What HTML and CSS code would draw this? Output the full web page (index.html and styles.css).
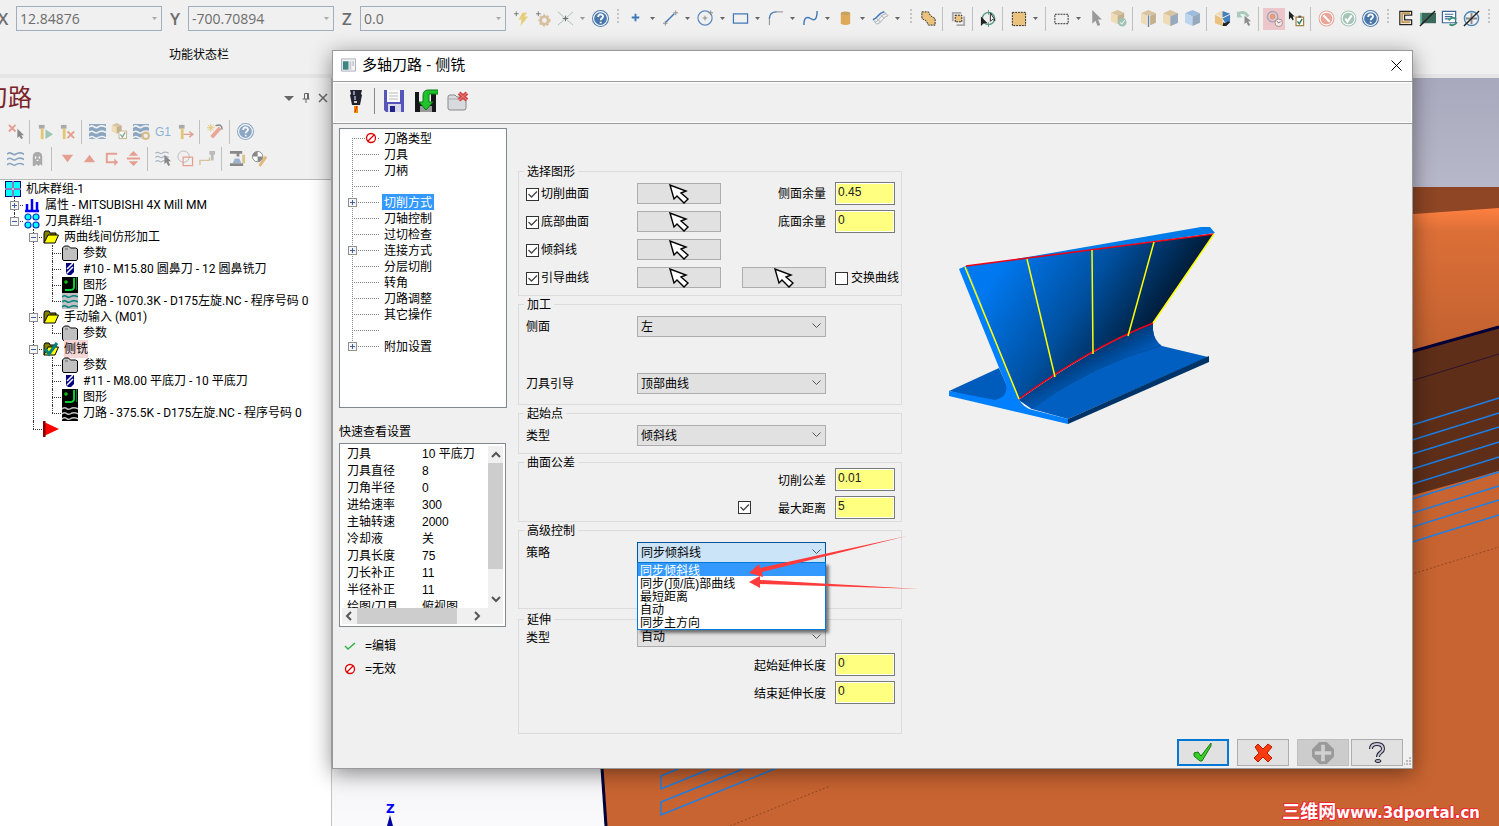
FILE: index.html
```
<!DOCTYPE html>
<html lang="zh-CN">
<head>
<meta charset="UTF-8">
<meta name="viewport" content="width=device-width, initial-scale=1.0">
<title>多轴刀路 - 侧铣</title>
<link rel="stylesheet" href="styles.css">
</head>
<body>

<!-- Shared icons -->
<svg class="sprite" aria-hidden="true">
    <symbol id="caret" viewBox="0 0 7 4"><path d="M1 0h5L3.500 3z" fill="currentColor"/></symbol>
    <symbol id="pick" viewBox="-1 -1 20 20"><path d="M0 0l4 14 3-3 7 7 4-4-7-6 5-2z" fill="#fff" stroke="#000" stroke-width="1.400"/></symbol>
    <symbol id="cursor" viewBox="0 0 10 16"><path d="M1 0v13l3-3 2 5 2.500-1-2-5H10z" fill="currentColor"/></symbol>
    <symbol id="waves" viewBox="0 0 16 16"><path d="M0 4c4-4 5 2 8 0s5-2 8 0M0 9c4-4 5 2 8 0s5-2 8 0M0 14c4-4 5 2 8 0s5-2 8 0" fill="none" stroke="currentColor" stroke-width="1.500"/></symbol>
    <symbol id="help" viewBox="0 0 16 16"><circle cx="8" cy="8" r="7.500" fill="#fff" stroke="#4a78ab"/><circle cx="8" cy="8" r="6" fill="#4a78ab"/><path d="M5.800 6.500c0-3 4.600-3 4.600-.4C10.400 7.800 8.200 7.600 8.200 9.600M8.200 11v1.500" fill="none" stroke="#fff" stroke-width="1.700"/></symbol>
    <symbol id="cube" viewBox="0 0 16 16"><path d="M8 0l7 3-7 3-7-3z" fill="#d9c4a2"/><path d="M1 3l7 3v9l-7-3z" fill="#efdcb6"/><path d="M15 3L8 6v9l7-3z" fill="#c5b08e"/></symbol>
    <symbol id="folder" viewBox="0 0 16 14"><path d="M1 13V3l1-2h4l1 2h6v2" fill="#808000" stroke="#000"/><path d="M1 13L5 5h10.500L12 13z" fill="#ff0" stroke="#000"/></symbol>
    <symbol id="params" viewBox="0 0 16 16"><path d="M.500 14V3l2-2h4l2 2h5l2 1v10l-1 1.500h-13z" fill="#c0c0c0" stroke="#000"/><path d="M3 4h3" stroke="#666"/></symbol>
    <symbol id="mill" viewBox="0 0 16 16"><path d="M4 2h8v9l-3 3H6l-2-2z" fill="#000080"/><path d="M5 8l6-6M5 12l6-6" stroke="#fff" stroke-width="1.500"/></symbol>
    <symbol id="geometry" viewBox="0 0 16 16"><path fill="#000" d="M0 0h16v16H0z"/><path d="M12 1v9q0 3-4 3H3" fill="none" stroke="#00d030" stroke-width="2"/><path d="M14.500 0v13" stroke="#067a1a"/><path d="M4 3v4M2 5h4" stroke="#0f0"/></symbol>
    <symbol id="denied" viewBox="0 0 12 12"><circle cx="6" cy="6" r="4.500" fill="#fff" stroke="#e00000" stroke-width="1.300"/><path d="M3 9l6-6" stroke="#e00000" stroke-width="1.300"/></symbol>
</svg>

<!-- Top ribbon -->
<header class="ribbon">
    <div class="ribbon-row">
        <div class="coords">
            <label for="posX">X</label><input id="posX" type="text" value="12.84876">
            <label for="posY">Y</label><input id="posY" type="text" value="-700.70894">
            <label for="posZ">Z</label><input id="posZ" type="text" value="0.0">
        </div>
        <button class="tool" aria-label="快速点"><svg viewBox="0 0 18 18"><path d="M1 4h5M3.500 1.500v5" stroke="#777"/><path d="M10 3h5l-3 4h4L8 17l1-7H6z" fill="#e6ce78"/></svg></button>
        <button class="tool" aria-label="设置"><svg viewBox="0 0 18 18"><path d="M1 4h5M3.500 1.500v5" stroke="#777"/><circle cx="10" cy="11" r="4" fill="none" stroke="#d7c0a0" stroke-width="3"/><circle cx="10" cy="11" r="5.500" fill="none" stroke="#d7c0a0" stroke-width="2" stroke-dasharray="2 2"/></svg></button>
        <button class="tool" aria-label="交点"><svg viewBox="0 0 18 18"><path d="M1 2l16 14M17 2L1 16" stroke="#a3bfb4"/><path d="M6 9h6M9 6v6" stroke="#666"/></svg></button>
        <button class="drop pale" aria-label="更多"><svg><use href="#caret"/></svg></button>
        <button class="tool" aria-label="帮助"><svg><use href="#help"/></svg></button>
        <span class="grip"></span>
        <button class="tool" aria-label="点"><svg viewBox="0 0 18 18"><path d="M5 8h8M9 4v8" stroke="#3f78b8" stroke-width="2"/></svg></button>
        <button class="drop" aria-label="更多"><svg><use href="#caret"/></svg></button>
        <button class="tool" aria-label="线"><svg viewBox="0 0 18 18"><path d="M4 13L13 4" stroke="#3f78b8" stroke-width="1.500"/><path d="M1 14h5M3.500 11.500v5M12 3h5M14.500.500v5" stroke="#888"/></svg></button>
        <button class="drop" aria-label="更多"><svg><use href="#caret"/></svg></button>
        <button class="tool" aria-label="圆"><svg viewBox="0 0 18 18"><circle cx="8.500" cy="8.500" r="7.500" fill="none" stroke="#5c8cc0" stroke-width="1.300"/><path d="M6 8.500h5M8.500 6v5M12 3h5M14.500.500v5" stroke="#888"/></svg></button>
        <button class="drop" aria-label="更多"><svg><use href="#caret"/></svg></button>
        <button class="tool" aria-label="矩形"><svg viewBox="0 0 18 18"><path d="M1.500 4h15v10h-15z" fill="none" stroke="#3f78b8" stroke-width="1.300"/></svg></button>
        <button class="drop" aria-label="更多"><svg><use href="#caret"/></svg></button>
        <button class="tool" aria-label="圆角"><svg viewBox="0 0 18 18"><path d="M2.500 8v8M9 2h8" stroke="#888"/><path d="M2.500 9Q3 2 10 2" fill="none" stroke="#3f78b8" stroke-width="1.500"/></svg></button>
        <button class="drop" aria-label="更多"><svg><use href="#caret"/></svg></button>
        <button class="tool" aria-label="曲线"><svg viewBox="0 0 18 18"><path d="M2 16C2 7 6 7 9 9s7 3 7-8" fill="none" stroke="#3f78b8" stroke-width="1.500"/></svg></button>
        <button class="drop" aria-label="更多"><svg><use href="#caret"/></svg></button>
        <button class="tool" aria-label="圆柱"><svg viewBox="0 0 18 18"><path d="M4 3.500v11q5 3 10 0v-11z" fill="#dfaa58"/><ellipse cx="9" cy="3.500" rx="5" ry="2" fill="#c9a262"/></svg></button>
        <button class="drop" aria-label="更多"><svg><use href="#caret"/></svg></button>
        <button class="tool" aria-label="曲面"><svg viewBox="0 0 18 18"><path d="M1 10C6 10 6 3 13 2l4 4C11 7 11 14 5 15zM3 13C9 11 8 5 15 4M5 9l4 4M9 5l4 4" fill="none" stroke="#aab0b8"/><path d="M1 10C6 10 6 3 13 2" fill="none" stroke="#3f78b8" stroke-width="1.500"/></svg></button>
        <button class="drop" aria-label="更多"><svg><use href="#caret"/></svg></button>
        <span class="grip"></span>
        <button class="tool" aria-label="框选"><svg viewBox="0 0 18 18"><path d="M2 2h7l2 4 5 3v7H9l-2-4-5-3z" fill="#ebc27d" stroke="#222" stroke-dasharray="2 1"/></svg></button>
        <span class="sep"></span>
        <button class="tool" aria-label="选择内部"><svg viewBox="0 0 18 18"><path d="M3 12V3h9M15 7v9H7" fill="none" stroke="#aaa" stroke-width="2"/><path d="M5.500 5.500h7v7h-7z" fill="#ebc27d" stroke="#222" stroke-dasharray="2 1"/></svg></button>
        <span class="sep"></span>
        <button class="tool" aria-label="切换选择"><svg viewBox="0 0 18 18"><circle cx="9" cy="9" r="6.500" fill="none" stroke="#579a86" stroke-width="1.500"/><path d="M9 0v5M9 13v5" stroke="#579a86"/><path d="M1 7v10l3-3h4z" fill="#222"/><path d="M11 3v9l2-2 3 1z" fill="#fff" stroke="#222"/></svg></button>
        <span class="sep"></span>
        <button class="tool" aria-label="窗选"><svg viewBox="0 0 18 18"><path d="M2.500 2.500h14v14h-14z" fill="#ebc27d" stroke="#222" stroke-dasharray="2 1"/></svg></button>
        <button class="drop" aria-label="更多"><svg><use href="#caret"/></svg></button>
        <span class="sep"></span>
        <button class="tool" aria-label="范围"><svg viewBox="0 0 18 18"><path d="M2 4.500h14v10H2z" fill="none" stroke="#222" stroke-dasharray="2 1"/></svg></button>
        <button class="drop" aria-label="更多"><svg><use href="#caret"/></svg></button>
        <button class="tool gray" aria-label="选择"><svg><use href="#cursor"/></svg></button>
        <button class="tool" aria-label="实体选择"><svg viewBox="0 0 18 18"><use href="#cube" width="16" height="16"/><circle cx="13" cy="13" r="4.500" fill="#9fc4b5"/><path d="M11 13l1.500 2 3-4" fill="none" stroke="#fff"/></svg></button>
        <span class="sep"></span>
        <button class="tool" aria-label="边"><svg viewBox="0 0 16 16"><use href="#cube"/><path d="M6.500 5h3v11h-3z" fill="#fff"/><path d="M8 5v11" stroke="#6a86a5" stroke-width="1.500"/></svg></button>
        <button class="tool" aria-label="面"><svg viewBox="0 0 16 16"><use href="#cube"/><path d="M15 3L8 6v9l7-3z" fill="#96abc0"/></svg></button>
        <button class="tool" aria-label="实体"><svg viewBox="0 0 16 16"><path d="M8 0l7 3-7 3-7-3z" fill="#9dbbdc"/><path d="M1 3l7 3v9l-7-3z" fill="#bdd5ee"/><path d="M15 3L8 6v9l7-3z" fill="#95a8bd"/></svg></button>
        <span class="sep"></span>
        <button class="tool" aria-label="反转面"><svg viewBox="0 0 18 18"><path d="M9 1L1 4l8 4z" fill="#efdcb6"/><path d="M9 1l8 3-8 4zM17 5v8l-4 2-4-6z" fill="#457fbd"/><path d="M1 5l8 4v8l-8-3z" fill="#ebc27d"/><path d="M9 17l1-4 2 1 3-2 2 1-4 4z" fill="#222"/></svg></button>
        <button class="tool" aria-label="上次"><svg viewBox="0 0 18 18"><path d="M2 4q7-4 11 3" fill="none" stroke="#a8cabd" stroke-width="3"/><path d="M1 1v7h6z" fill="#a8cabd"/><path d="M9 6v9l2-2 2 4 2-1-2-4h3z" fill="#8c8c8c"/></svg></button>
        <span class="sep"></span>
        <button class="tool active" aria-label="验证选择"><svg viewBox="0 0 18 18"><circle cx="7" cy="7" r="5.500" fill="none" stroke="#a6a6b4" stroke-width="1.500"/><circle cx="7" cy="7" r="2.500" fill="#ec9c78" stroke="#c89a80"/><circle cx="13.500" cy="13.500" r="4" fill="#f6e6e6" stroke="#a09090"/><path d="M11.500 12l2 1.500 2-1" fill="none" stroke="#777"/></svg></button>
        <button class="tool" aria-label="选择验证"><svg viewBox="0 0 18 18"><path d="M1 1v9l2-2 2 3 1-1-1-3h2z" fill="#222"/><path d="M8.500 7.500h8v9h-8z" fill="#fff" stroke="#a8823c" stroke-width="1.300"/><path d="M11 6h3v2h-3z" fill="#555"/><path d="M10 12l2 2.500 3-5" fill="none" stroke="#2e7d64" stroke-width="1.500"/></svg></button>
        <span class="sep"></span>
        <button class="tool" aria-label="取消"><svg viewBox="0 0 16 16"><circle cx="8" cy="8" r="7" fill="#fff" stroke="#e8a598"/><circle cx="8" cy="8" r="5.500" fill="#e8a598"/><path d="M5 5l6 6" stroke="#fff" stroke-width="2"/></svg></button>
        <button class="tool" aria-label="确定"><svg viewBox="0 0 16 16"><circle cx="8" cy="8" r="7" fill="#fff" stroke="#a4c4b8"/><circle cx="8" cy="8" r="5.500" fill="#a4c4b8"/><path d="M5 8l2 3 4-6" fill="none" stroke="#fff" stroke-width="2"/></svg></button>
        <button class="tool" aria-label="帮助"><svg><use href="#help"/></svg></button>
        <span class="grip"></span>
        <button class="tool" aria-label="外形"><svg viewBox="0 0 18 18"><path d="M3 1.500h12.500v4H8v5h7.500v5H3z" fill="#fff" stroke="#222" stroke-width="1.300"/><path d="M14 3.500H5.500v9.500H14" fill="none" stroke="#c39a50" stroke-width="2"/></svg></button>
        <button class="tool" aria-label="隐藏"><svg viewBox="0 0 18 18"><path d="M1 3h4v12H1z" fill="#6cb29c"/><path d="M3 3h15v11H3z" fill="#3b6a5c"/><path d="M1 17L17 1" stroke="#222" stroke-width="1.500"/></svg></button>
        <button class="tool" aria-label="重新生成"><svg viewBox="0 0 18 18"><path d="M1.500 1.500h14v12h-14zM4 4.500h9M4 7h8M4 9.500h5" fill="#fff" stroke="#3d6896" stroke-width="1.300"/><path d="M8 11q4-5 8-1M17 13q-4 5-8 2" fill="none" stroke="#3c9078" stroke-width="2"/></svg></button>
        <button class="tool" aria-label="隐藏坐标"><svg viewBox="0 0 18 18"><circle cx="9" cy="9" r="7.500" fill="none" stroke="#4c87b8" stroke-width="1.500"/><path d="M3 9h12M9 3v12" stroke="#888" stroke-width="2"/><path d="M1 17L17 1" stroke="#222" stroke-width="1.500"/></svg></button>
        <span class="grip"></span>
    </div>
    <p class="status">功能状态栏</p>
</header>

<main class="workspace">
    <!-- Toolpath manager -->
    <aside class="manager">
        <div class="manager-title">
            <h1>刀路</h1>
            <button aria-label="菜单"><svg viewBox="0 0 10 10"><path d="M0 3h10L5 8z" fill="#666"/></svg></button>
            <button aria-label="固定"><svg viewBox="0 0 10 10"><path d="M3.500 6V.500h4V6M1.500 6h7M5 6v4M6.500 1v5" fill="none" stroke="#666"/></svg></button>
            <button aria-label="关闭"><svg viewBox="0 0 10 10"><path d="M1 1l8 8M9 1L1 9" stroke="#666" stroke-width="1.500"/></svg></button>
        </div>
        <div class="manager-tools">
            <button class="tool" aria-label="取消选择"><svg viewBox="0 0 18 18"><path d="M2 2l7 7M9 2L2 9" stroke="#e59f90" stroke-width="2"/><path d="M11 6v10l2-2 2 3 2-1-2-3h3z" fill="#888"/></svg></button>
            <span class="sep"></span>
            <button class="tool" aria-label="重算全部"><svg viewBox="0 0 18 18"><path d="M2 2h6v4H2z" fill="#aaa"/><path d="M4 6h3v11H4z" fill="#e3c672"/><path d="M9 7l8 5-8 5z" fill="#9cc6b4"/></svg></button>
            <button class="tool" aria-label="重算失效"><svg viewBox="0 0 18 18"><path d="M2 2h6v4H2z" fill="#aaa"/><path d="M4 6h3v11H4z" fill="#e3c672"/><path d="M9 9l7 7M16 9l-7 7" stroke="#e59f90" stroke-width="2"/></svg></button>
            <span class="sep"></span>
            <button class="tool" aria-label="模拟"><svg viewBox="0 0 16 16"><path d="M0 1h16v14H0z" fill="#8ba5c0"/><use href="#waves" class="light"/></svg></button>
            <button class="tool" aria-label="验证"><svg viewBox="0 0 18 18"><use href="#cube" width="12" height="12"/><path d="M8.500 8.500h8v8h-8z" fill="#fff" stroke="#c4af85"/><path d="M10 12l2 3 3-5" fill="none" stroke="#80ad9e" stroke-width="1.500"/></svg></button>
            <button class="tool" aria-label="模拟选项"><svg viewBox="0 0 16 16"><path d="M0 1h15v14H0z" fill="#8ba5c0"/><use href="#waves" class="light"/><circle cx="12" cy="12" r="3" fill="#eee" stroke="#d8bd88" stroke-width="2"/></svg></button>
            <button class="tool g1">G1</button>
            <button class="tool" aria-label="高速"><svg viewBox="0 0 18 18"><path d="M2 2h6v4H2z" fill="#aaa"/><path d="M4 6h3v11H4z" fill="#e3c672"/><path d="M7 12h10M13 9l4 3-4 3" fill="none" stroke="#e59f90" stroke-width="1.500"/></svg></button>
            <span class="sep"></span>
            <button class="tool" aria-label="优化"><svg viewBox="0 0 18 18"><path d="M4 1v8M0 5h8M1 2l6 6M7 2L1 8" stroke="#e3c672"/><path d="M5 15L14 5" stroke="#e8a598" stroke-width="4"/><path d="M9 3q7-3 7 4" fill="none" stroke="#888" stroke-width="1.500"/></svg></button>
            <span class="sep"></span>
            <button class="tool faded" aria-label="帮助"><svg><use href="#help"/></svg></button>
        </div>
        <div class="manager-tools">
            <button class="tool steel" aria-label="显示刀路"><svg><use href="#waves"/></svg></button>
            <button class="tool" aria-label="幻影"><svg viewBox="0 0 18 18"><path d="M4 17V7q0-5 5-5t5 5v10l-2-2-2 2-2-2-2 2z" fill="#aaa"/><path d="M7 7v2M11 7v2M8 11h2" stroke="#fff" stroke-width="1.500"/></svg></button>
            <span class="sep"></span>
            <button class="tool coral" aria-label="下移"><svg viewBox="0 0 18 18"><path d="M3 5h12l-6 8z"/></svg></button>
            <button class="tool coral" aria-label="上移"><svg viewBox="0 0 18 18"><path d="M3 13h12L9 5z"/></svg></button>
            <button class="tool coral" aria-label="插入"><svg viewBox="0 0 18 18"><path d="M15 3H3v11h9v3l4-4-4-4v3H5V5h10z"/></svg></button>
            <button class="tool coral" aria-label="滚动"><svg viewBox="0 0 18 18"><path d="M9 1l5 5H4zM2 8h14v2H2zM4 12h10l-5 5z"/></svg></button>
            <span class="sep"></span>
            <button class="tool" aria-label="选择刀路"><svg viewBox="0 0 18 18"><use href="#waves" class="mist" width="15" height="14"/><path d="M10 5v10l2-2 2 4 2-1-2-4h3z" fill="#888"/></svg></button>
            <button class="tool" aria-label="关联图形"><svg viewBox="0 0 18 18"><circle cx="7" cy="7" r="6" fill="none" stroke="#bbb"/><path d="M6.500 7.500h10v9h-10z" fill="none" stroke="#e59f90" stroke-width="1.300"/></svg></button>
            <button class="tool" aria-label="进退刀"><svg viewBox="0 0 18 18"><path d="M1 16v-5h10V8" fill="none" stroke="#d5c49c" stroke-width="1.500"/><path d="M11 1h6v4h-1.500v6h-3V5H11z" fill="#bbb"/></svg></button>
            <span class="sep"></span>
            <button class="tool" aria-label="机床模拟"><svg viewBox="0 0 18 18"><path d="M1 1h13v3h-3v3H8V4H1zM1 14h14v3H1z" fill="#888"/><path d="M4 14l2-5h5l2 5z" fill="#9ab2cc"/><path d="M14 5h3v9h-3z" fill="#d9c48c"/></svg></button>
            <button class="tool" aria-label="检查"><svg viewBox="0 0 18 18"><circle cx="7" cy="7" r="5.500" fill="#fff" stroke="#888"/><path d="M7 1.500A5.500 5.500 0 0 0 1.500 7H7zM7 12.500A5.500 5.500 0 0 0 12.500 7H7z" fill="#888"/><path d="M9 17l7-10" stroke="#e3b878" stroke-width="3"/></svg></button>
        </div>
        <div class="op-tree">
            <div class="op"><svg viewBox="0 0 16 16"><path d="M0 0h16v16H0z" fill="#000080"/><path d="M1 1h6v6H1zM9 1h6v6H9zM1 9h6v6H1zM9 9h6v6H9z" fill="#0ff"/><path d="M8 0v16M0 8h16" stroke="#fff"/></svg>机床群组-1</div>
            <ul>
                <li><div class="op"><i class="box plus"></i><svg viewBox="0 0 16 16"><path d="M1 14h14M3 13V7M8 13V2M13 13V5" stroke="#00f" stroke-width="2.500"/></svg>属性 - MITSUBISHI 4X Mill MM</div></li>
                <li><div class="op"><i class="box"></i><svg viewBox="0 0 16 16"><g fill="#0ff" stroke="#0030c0" stroke-width="1.200"><circle cx="4" cy="4" r="3"/><circle cx="12" cy="4" r="3"/><circle cx="4" cy="12" r="3"/><circle cx="12" cy="12" r="3"/></g></svg>刀具群组-1</div>
                    <ul>
                        <li><div class="op"><i class="box"></i><svg><use href="#folder"/></svg>两曲线间仿形加工</div>
                            <ul>
                                <li><div class="op"><svg><use href="#params"/></svg>参数</div></li>
                                <li><div class="op"><svg><use href="#mill"/></svg>#10 - M15.80 圆鼻刀 - 12 圆鼻铣刀</div></li>
                                <li><div class="op"><svg><use href="#geometry"/></svg>图形</div></li>
                                <li><div class="op"><svg class="path-on"><use href="#waves"/></svg>刀路 - 1070.3K - D175左旋.NC - 程序号码 0</div></li>
                            </ul>
                        </li>
                        <li><div class="op"><i class="box"></i><svg><use href="#folder"/></svg>手动输入 (M01)</div>
                            <ul>
                                <li><div class="op"><svg><use href="#params"/></svg>参数</div></li>
                            </ul>
                        </li>
                        <li><div class="op"><i class="box"></i><svg viewBox="0 0 16 16"><use href="#folder"/><path d="M2 8l4 5 8-11" fill="none" stroke="#008080" stroke-width="3"/></svg><mark>侧铣</mark></div>
                            <ul>
                                <li><div class="op"><svg><use href="#params"/></svg>参数</div></li>
                                <li><div class="op"><svg><use href="#mill"/></svg>#11 - M8.00 平底刀 - 10 平底刀</div></li>
                                <li><div class="op"><svg><use href="#geometry"/></svg>图形</div></li>
                                <li><div class="op"><svg class="path-off"><use href="#waves"/></svg>刀路 - 375.5K - D175左旋.NC - 程序号码 0</div></li>
                            </ul>
                        </li>
                        <li><div class="op"><svg viewBox="0 0 16 16"><path d="M1 1l15 7-15 7z" fill="#f00"/><path d="M1 0v16" stroke="#800000" stroke-width="3"/></svg></div></li>
                    </ul>
                </li>
            </ul>
        </div>
    </aside>

    <!-- Graphics view -->
    <svg class="view" viewBox="332 78 1167 748" preserveAspectRatio="xMaxYMax slice">
        <defs>
            <linearGradient id="sky" x2="0" y2="1"><stop offset="0" stop-color="#a9a9bd"/><stop offset=".15" stop-color="#b8b8cb"/><stop offset="1" stop-color="#fafafc"/></linearGradient>
            <linearGradient id="wall" x2="0" y2="1"><stop offset="0" stop-color="#ff8040"/><stop offset=".15" stop-color="#dc6f38"/><stop offset="1" stop-color="#c0602f"/></linearGradient>
        </defs>
        <path d="M332 78h1167v748H332z" fill="url(#sky)"/>
        <path d="M1300 187h199v40h-199z" fill="#8e4624"/>
        <path d="M1300 222l199-14v150h-199z" fill="url(#wall)"/>
        <path d="M602 760L1300 520l199-49v355H606z" fill="#c86431"/>
        <path d="M1300 383l199-56v144l-199 56z" fill="#5e2e19"/>
        <path d="M1300 383l199-56" stroke="#000038" stroke-width="3"/>
        <path d="M1300 415l199-61" stroke="#2d1430"/>
        <g stroke="#1a80ea" stroke-width="1.400" fill="none">
            <path d="M1300 460l199-62M1300 475l199-62M1300 489l199-62M1300 504l199-62M1300 519l199-62M1300 534l199-62M1300 548l199-62M1300 562l199-62M1300 577l199-62"/>
            <path d="M678 769l-17 7v13l49-20M743 769l-82 33v13l116-47"/>
        </g>
        <path d="M730 826l100-40M1300 609l199-62" stroke="#914820" stroke-dasharray="2 2"/>
        <path d="M602 768l4 58" stroke="#000038" stroke-width="3"/>
        <text class="axis" x="386" y="813">Z</text>
        <path d="M390 815l3 11h-6z" fill="#0000a0"/>
    </svg>
</main>

<p class="watermark"><span>三维网</span>www.3dportal.cn</p>

<!-- Multiaxis toolpath dialog -->
<section class="dialog" role="dialog" aria-labelledby="dlgTitle">
    <div class="dialog-title">
        <svg viewBox="0 0 16 14"><path d="M.500.500h15v13H.500z" fill="#f4f4f4" stroke="#aab"/><path d="M2 3h6v9H2z" fill="#3d8580"/><path d="M9 3h2v9H9zM12 3h2v5h-2z" fill="#c5ccd4"/></svg>
        <h2 id="dlgTitle">多轴刀路 - 侧铣</h2>
        <button aria-label="关闭"><svg viewBox="0 0 11 11"><path d="M.500.500l10 10M10.500.500l-10 10" stroke="#000"/></svg></button>
    </div>
    <div class="dialog-tools">
        <button aria-label="刀具"><svg viewBox="0 0 24 24"><path d="M6 1h12l-1 4 1 1-2 10H8L6 6l1-1z" fill="#22222e"/><path d="M10 2v4M11 7v4" stroke="#8888a8" stroke-width="2"/><path d="M10 13h3" stroke="#ccc" stroke-width="2"/><path d="M10 17h4v7h-4z" fill="#f08c00"/><path d="M13 17l-2 6" stroke="#d83000"/></svg></button>
        <span class="rule"></span>
        <button aria-label="保存"><svg viewBox="0 0 24 24"><path d="M2 1h20v22H4l-2-2z" fill="#5555ba"/><path d="M5 1h13v12H5z" fill="#fafafa"/><path d="M7 4h9M7 7h9M7 10h9" stroke="#bbb"/><path d="M6 15h13v8H6z" fill="#d8d8e8"/><path d="M8 17h5v6H8z" fill="#22228c"/></svg></button>
        <button aria-label="载入"><svg viewBox="0 0 24 24"><path d="M1 3h21v20H1z" fill="#16161a"/><path d="M5 3h12v10H5z" fill="#eee"/><path d="M6 17h12v6H6z" fill="#999"/><path d="M24 1H14q-5 0-5 6v6H5l7 8 7-8h-4V5h9z" fill="#21c32c" stroke="#0b7a14"/></svg></button>
        <button aria-label="关闭页"><svg viewBox="0 0 24 24"><path d="M2 8q0-2 2-2h5l2 2h7q2 0 2 2v9q0 2-2 2H4q-2 0-2-2z" fill="#d8dade" stroke="#888"/><path d="M2 10h18" stroke="#aaa"/><path d="M13 4l8 7M21 4l-8 7" stroke="#d04848" stroke-width="4"/><path d="M13 4l8 7M21 4l-8 7" stroke="#f08080"/></svg></button>
    </div>
    <div class="dialog-body">
        <div class="side">
            <ul class="pages">
                <li><svg><use href="#denied"/></svg><span>刀路类型</span></li>
                <li><span>刀具</span></li>
                <li><span>刀柄</span></li>
                <li></li>
                <li><i class="box plus"></i><span class="current">切削方式</span></li>
                <li><span>刀轴控制</span></li>
                <li><span>过切检查</span></li>
                <li><i class="box plus"></i><span>连接方式</span></li>
                <li><span>分层切削</span></li>
                <li><span>转角</span></li>
                <li><span>刀路调整</span></li>
                <li><span>其它操作</span></li>
                <li></li>
                <li><i class="box plus"></i><span>附加设置</span></li>
            </ul>
            <h3>快速查看设置</h3>
            <div class="quick">
                <div class="quick-main">
                    <div class="quick-list">
                        <table>
                            <tr><th>刀具</th><td>10 平底刀</td></tr>
                            <tr><th>刀具直径</th><td>8</td></tr>
                            <tr><th>刀角半径</th><td>0</td></tr>
                            <tr><th>进给速率</th><td>300</td></tr>
                            <tr><th>主轴转速</th><td>2000</td></tr>
                            <tr><th>冷却液</th><td>关</td></tr>
                            <tr><th>刀具长度</th><td>75</td></tr>
                            <tr><th>刀长补正</th><td>11</td></tr>
                            <tr><th>半径补正</th><td>11</td></tr>
                            <tr><th>绘图/刀具</th><td>俯视图</td></tr>
                        </table>
                    </div>
                    <div class="vbar"><svg viewBox="0 0 10 10"><path d="M1 7l4-4 4 4"/></svg><span></span><svg viewBox="0 0 10 10"><path d="M1 3l4 4 4-4"/></svg></div>
                </div>
                <div class="hbar"><svg viewBox="0 0 10 10"><path d="M7 1L3 5l4 4"/></svg><span></span><svg viewBox="0 0 10 10"><path d="M3 1l4 4-4 4"/></svg></div>
            </div>
            <p class="legend"><svg viewBox="0 0 12 12"><path d="M1 6l3 3 7-6" fill="none" stroke="#2fb24a" stroke-width="1.500"/></svg>=编辑</p>
            <p class="legend"><svg><use href="#denied"/></svg>=无效</p>
        </div>

        <form class="form">
            <fieldset>
                <legend>选择图形</legend>
                <div class="row">
                    <label class="name"><input type="checkbox" checked>切削曲面</label>
                    <div class="control"><button type="button" class="pick" aria-label="选择切削曲面"><svg><use href="#pick"/></svg></button><label class="unit" for="wallStock">侧面余量</label></div>
                    <input id="wallStock" type="text" value="0.45">
                </div>
                <div class="row">
                    <label class="name"><input type="checkbox" checked>底部曲面</label>
                    <div class="control"><button type="button" class="pick" aria-label="选择底部曲面"><svg><use href="#pick"/></svg></button><label class="unit" for="floorStock">底面余量</label></div>
                    <input id="floorStock" type="text" value="0">
                </div>
                <div class="row">
                    <label class="name"><input type="checkbox" checked>倾斜线</label>
                    <div class="control"><button type="button" class="pick" aria-label="选择倾斜线"><svg><use href="#pick"/></svg></button></div>
                </div>
                <div class="row">
                    <label class="name"><input type="checkbox" checked>引导曲线</label>
                    <div class="control"><button type="button" class="pick" aria-label="选择引导曲线一"><svg><use href="#pick"/></svg></button><button type="button" class="pick" aria-label="选择引导曲线二"><svg><use href="#pick"/></svg></button></div>
                    <label class="swap"><input type="checkbox">交换曲线</label>
                </div>
            </fieldset>
            <fieldset class="machining">
                <legend>加工</legend>
                <div class="row"><label class="name" for="sideSel">侧面</label><select id="sideSel"><option>左</option></select></div>
                <div class="row"><label class="name" for="guideSel">刀具引导</label><select id="guideSel"><option>顶部曲线</option></select></div>
            </fieldset>
            <fieldset>
                <legend>起始点</legend>
                <div class="row"><label class="name" for="startSel">类型</label><select id="startSel"><option>倾斜线</option></select></div>
            </fieldset>
            <fieldset class="tight">
                <legend>曲面公差</legend>
                <div class="row"><label class="wide" for="cutTol">切削公差</label><input id="cutTol" type="text" value="0.01"></div>
                <div class="row"><div class="wide"><input type="checkbox" aria-label="启用最大距离" checked><label for="maxDist">最大距离</label></div><input id="maxDist" type="text" value="5"></div>
            </fieldset>
            <fieldset class="advanced">
                <legend>高级控制</legend>
                <div class="row">
                    <label class="name" for="strategy">策略</label>
                    <div class="combo">
                        <select id="strategy" class="open"><option>同步倾斜线</option></select>
                        <ul class="options">
                            <li class="hover">同步倾斜线</li>
                            <li>同步(顶/底)部曲线</li>
                            <li>最短距离</li>
                            <li>自动</li>
                            <li>同步主方向</li>
                        </ul>
                        <svg class="pointers" viewBox="0 0 170 56"><path d="M0 38l10-9 1 4L158 1 13 37l1 5z"/><path d="M0 47l11-6v4L170 54 11 49v4z"/></svg>
                    </div>
                </div>
            </fieldset>
            <fieldset class="tight extend">
                <legend>延伸</legend>
                <div class="row"><label class="name" for="extSel">类型</label><select id="extSel"><option>自动</option></select></div>
                <div class="row"><label class="wide" for="extStart">起始延伸长度</label><input id="extStart" type="text" value="0"></div>
                <div class="row"><label class="wide" for="extEnd">结束延伸长度</label><input id="extEnd" type="text" value="0"></div>
            </fieldset>
        </form>

        <div class="preview">
            <svg viewBox="0 0 268 198">
                <defs>
                    <linearGradient id="web" gradientUnits="userSpaceOnUse" x1="60" y1="30" x2="200" y2="125"><stop offset="0" stop-color="#0078ef"/><stop offset=".5" stop-color="#0050a0"/><stop offset="1" stop-color="#001428"/></linearGradient>
                    <linearGradient id="fillet" gradientUnits="userSpaceOnUse" x1="137" y1="130" x2="150" y2="155"><stop offset="0" stop-color="#003a78"/><stop offset="1" stop-color="#0062c8"/></linearGradient>
                </defs>
                <path d="M1 164l50-23 14 31-17 4z" fill="#005cbc"/>
                <path d="M71 173q70-50 134-77v7q1 10 9 16l46 11-140 62-36-10z" fill="#005fc0"/>
                <path d="M71 173q70-50 134-77v7q1 10 7 16Q144 138 84 182z" fill="url(#fillet)"/>
                <path d="M84 181Q144 138 212 119" fill="none" stroke="#00509c"/>
                <path d="M120 192l141-63v6L120 197z" fill="#003468"/>
                <path d="M11 42L253 0h9l5 6L17 40z" fill="#007be8"/>
                <path d="M18 39L266 7l-61 89Q140 122 71 172z" fill="url(#web)"/>
                <path d="M11 42l7-3 53 133q4 9 14 11l35 9v5L1 169v-5l46 9q14-3 11-16L52 143z" fill="#0080ff"/>
                <path d="M18 39L266 7M71 172Q140 122 205 96" fill="none" stroke="#f00014" stroke-width="1.500"/>
                <path d="M17 40l54 132M79 32l28 118M144 23l1 104M206 15l-26 94M266 7l-61 89" stroke="#ff0" stroke-width="1.500"/>
            </svg>
        </div>
    </div>
    <div class="dialog-foot">
        <button class="ok" aria-label="确定"><svg viewBox="0 0 22 22"><path d="M2 11l4-1 3 4L19 1v3L10 19H8L2 14z" fill="#3ccc28" stroke="#147a10"/></svg></button>
        <button aria-label="取消"><svg viewBox="0 0 22 22"><path d="M3 5l3-3 5 5 5-5 4 3-5 6 5 5-4 4-5-5-5 5-4-4 5-5z" fill="#f83c10" stroke="#c01800"/></svg></button>
        <button class="off" aria-label="添加" disabled><svg viewBox="0 0 24 24"><path d="M8 0h8l8 8v8l-8 8H8l-8-8V8z" fill="#9a9a9a"/><path d="M3 12h18M12 3v18" stroke="#d0d0d0" stroke-width="4"/></svg></button>
        <button class="what" aria-label="帮助"><svg viewBox="0 0 22 22"><path d="M5 7q0-5 6-5t6 5c0 4-5 3-5 8" fill="none" stroke="#22222c" stroke-width="4"/><path d="M5 7q0-5 6-5t6 5c0 4-5 3-5 8" fill="none" stroke="#c8c8dc" stroke-width="2"/><ellipse cx="12" cy="19" rx="3" ry="1.500" fill="#b8b8d0" stroke="#22222c"/></svg></button>
        <svg class="sizer" viewBox="0 0 7 9"><path d="M5 0h2v2H5zM2 3h2v2H2zM5 3h2v2H5zM0 6h1v2H0zM2 6h2v2H2zM5 6h2v2H5z" fill="#bbb"/></svg>
    </div>
</section>

</body>
</html>
```
FILE: styles.css
```
* {
    box-sizing: border-box;
}
body {
    margin: 0;
    height: 100vh;
    display: flex;
    flex-direction: column;
    overflow: hidden;
    position: relative;
    font-family: "Liberation Sans", "Noto Sans CJK SC", sans-serif;
    font-size: 12px;
    line-height: 16px;
    color: #000;
    background-color: #f0f0f0;
}
h1, h2, h3, p, ul {
    margin: 0;
    padding: 0;
    font-weight: normal;
    list-style: none;
}
button {
    padding: 0;
    border: none;
    background: none;
    font: inherit;
}
input, select {
    font: inherit;
    margin: 0;
}
svg {
    display: block;
    flex: none;
}
.sprite {
    position: absolute;
    width: 0;
    height: 0;
}

/* Ribbon */
.ribbon {
    height: 78px;
    padding-top: 6px;
    border-bottom: 4px solid #e5e5e5;
    overflow: hidden;
}
.ribbon-row {
    display: flex;
    align-items: center;
    height: 25px;
}
.coords {
    display: flex;
    align-items: center;
    flex: none;
    margin-left: -10px;
    margin-right: 4px;
    font-family: "Open Sans", sans-serif;
    color: #6d6d6d;
}
.coords label {
    width: 26px;
    text-align: center;
    font-size: 17px;
    font-weight: 600;
}
.coords input {
    width: 146px;
    height: 25px;
    padding: 0 3px;
    border: 1px solid #a0aebd;
    color: #6d6d6d;
    font-size: 14px;
    background: #f0f0f0 url("data:image/svg+xml,%3Csvg xmlns='http://www.w3.org/2000/svg' width='5' height='3'%3E%3Cpath d='M0 0h5L2.5 3z' fill='%23aaa'/%3E%3C/svg%3E") no-repeat right 4px center;
}
.tool {
    flex: none;
    width: 22px;
    height: 22px;
    display: flex;
    align-items: center;
    justify-content: center;
}
.tool svg {
    width: 17px;
    height: 17px;
}
.drop {
    flex: none;
    width: 13px;
    color: #666;
}
.drop svg {
    width: 7px;
    height: 4px;
    margin: 0 auto;
}
.pale, .gray {
    color: #999;
}
.active {
    background-color: #ecc6ca;
}
.faded {
    opacity: 0.6;
}
.steel {
    color: #8ba5c0;
}
.light {
    color: #f0f0f0;
}
.mist {
    color: #aab8c4;
}
.coral {
    fill: #e59f90;
}
.g1 {
    color: #8fb0d6;
    font-size: 12px;
}
.sep {
    flex: none;
    width: 2px;
    height: 24px;
    margin: 0 3px;
    border-left: 1px solid #c0c0c0;
}
.grip {
    flex: none;
    width: 2px;
    height: 15px;
    margin: 0 5px 4px 6px;
    background: repeating-linear-gradient(#c4c4c4 0 2px, transparent 2px 4px);
}
.status {
    margin-top: 16px;
    padding-left: 169px;
}

/* Toolpath manager */
.workspace {
    flex: 1;
    display: flex;
    min-height: 0;
}
.manager {
    width: 332px;
    flex: none;
    display: flex;
    flex-direction: column;
    border-right: 1px solid #c3c3c3;
}
.manager-title {
    display: flex;
    align-items: center;
    gap: 7px;
    height: 40px;
    padding-right: 3px;
    overflow: hidden;
}
.manager-title h1 {
    flex: 1;
    margin-left: -16px;
    font-size: 24px;
    line-height: 42px;
    color: #7b2428;
}
.manager-title svg {
    width: 10px;
    height: 10px;
}
.manager-tools {
    display: flex;
    align-items: center;
    height: 27px;
    padding-left: 4px;
}
.op-tree {
    flex: 1;
    margin-top: 7px;
    padding: 1px 0 0 5px;
    border-top: 1px solid #b8b8b8;
    background-color: #fff;
    font-family: Roboto, "Noto Sans CJK SC", sans-serif;
    line-height: 18px;
    white-space: nowrap;
}
.op {
    display: flex;
    align-items: center;
    gap: 5px;
    height: 16px;
    position: relative;
}
.op svg {
    width: 16px;
    height: 16px;
}
.op mark {
    background-color: #f3d6d6;
    color: #000;
}
.op-tree ul {
    margin-left: 9px;
}
.op-tree li {
    position: relative;
    padding-left: 10px;
}
.op-tree li::before {
    content: "";
    position: absolute;
    left: 0;
    top: 0;
    bottom: 0;
    border-left: 1px dotted #333;
}
.op-tree li:last-child::before {
    bottom: auto;
    height: 8px;
}
.op-tree li > .op::before {
    content: "";
    position: absolute;
    left: -10px;
    top: 8px;
    width: 9px;
    border-top: 1px dotted #333;
}
.box {
    width: 9px;
    height: 9px;
    border: 1px solid #8e8f8f;
    background: linear-gradient(#3d5fa0, #3d5fa0) center / 5px 1px no-repeat, #f6f6f6;
}
.box.plus {
    background: linear-gradient(#3d5fa0, #3d5fa0) center / 5px 1px no-repeat, linear-gradient(#3d5fa0, #3d5fa0) center / 1px 5px no-repeat, #f6f6f6;
}
.op .box {
    position: absolute;
    left: -14px;
    top: 4px;
}
.path-on {
    color: #008080;
    background-color: #c0c0c0;
}
.path-off {
    color: #c0c0c0;
    background-color: #000;
}

/* Graphics view */
.view {
    flex: 1;
    min-width: 0;
    height: 100%;
}
.axis {
    font: bold 12px "DejaVu Sans", sans-serif;
    fill: #00f;
}
.watermark {
    position: absolute;
    right: 19px;
    bottom: 4px;
    font: bold 15px "DejaVu Sans", "Noto Sans CJK SC", sans-serif;
    line-height: 18px;
    color: #fff;
    text-shadow: 1px 0 #f02830, -1px 0 #f02830, 0 1px #f02830, 0 -1px #f02830, 1px 1px #f02830, -1px -1px #f02830;
}
.watermark span {
    font-size: 18px;
}

/* Dialog */
.dialog {
    position: absolute;
    left: 332px;
    right: 86px;
    top: 50px;
    bottom: 57px;
    display: flex;
    flex-direction: column;
    border: 1px solid #999;
    background-color: #f0f0f0;
    box-shadow: 0 4px 20px rgba(0, 0, 0, 0.45);
}
.dialog-title {
    display: flex;
    align-items: center;
    gap: 6px;
    height: 30px;
    padding: 0 10px 2px 8px;
    background-color: #fff;
}
.dialog-title > svg {
    width: 15px;
    height: 14px;
}
.dialog-title h2 {
    flex: 1;
    font-size: 15px;
}
.dialog-title button svg {
    width: 11px;
    height: 11px;
}
.dialog-tools {
    display: flex;
    align-items: center;
    gap: 8px;
    height: 43px;
    padding: 0 11px 4px;
    border-top: 1px solid #999;
    border-bottom: 1px solid #999;
    box-shadow: inset 0 0 0 1px #fff;
}
.dialog-tools svg {
    width: 24px;
    height: 24px;
}
.rule {
    height: 26px;
    margin: 0 -1px 0 -2px;
    border-left: 1px solid #888;
}
.dialog-body {
    flex: 1;
    min-height: 0;
    display: flex;
    padding: 4px 6px 0;
}
.side {
    width: 168px;
    flex: none;
}
.pages {
    height: 280px;
    padding: 1px 0 0 12px;
    border: 1px solid #828790;
    background-color: #fff;
}
.pages li {
    display: flex;
    align-items: center;
    position: relative;
    height: 16px;
    padding-left: 30px;
    background: repeating-linear-gradient(90deg, #888 0 1px, transparent 1px 2px) 0 8px / 28px 1px no-repeat, repeating-linear-gradient(#888 0 1px, transparent 1px 2px) 0 0 / 1px 16px no-repeat;
}
.pages li:first-child {
    background-position: 0 8px, 0 8px;
}
.pages li:last-child {
    background-size: 28px 1px, 1px 8px;
}
.pages li > svg {
    position: absolute;
    left: 13px;
    width: 12px;
    height: 12px;
    background-color: #fff;
}
.pages .box {
    position: absolute;
    left: -4px;
    top: 4px;
}
.pages span {
    height: 16px;
    padding: 0 2px;
    line-height: 18px;
}
.pages .current {
    background-color: #3399ff;
    color: #fff;
}
.side h3 {
    margin: 16px 0 3px;
    font-size: 12px;
}
.quick {
    width: 167px;
    height: 184px;
    padding: 2px;
    border: 1px solid #828790;
    background-color: #fff;
}
.quick-main {
    display: flex;
    height: 162px;
}
.quick-list {
    flex: 1;
    overflow: hidden;
}
.quick table {
    border-collapse: collapse;
    white-space: nowrap;
}
.quick th, .quick td {
    height: 17px;
    padding: 0 0 0 5px;
    font-weight: normal;
    text-align: left;
    line-height: 17px;
}
.quick th {
    width: 75px;
}
.vbar, .hbar {
    display: flex;
    background-color: #f0f0f0;
}
.vbar {
    flex-direction: column;
    align-items: center;
    justify-content: space-between;
    width: 15px;
    padding: 4px 0;
}
.vbar svg, .hbar svg {
    width: 10px;
    height: 10px;
    fill: none;
    stroke: #555;
    stroke-width: 2;
}
.vbar span {
    width: 15px;
    height: 106px;
    margin-bottom: 22px;
    background-color: #cdcdcd;
}
.hbar {
    align-items: center;
    gap: 3px;
    height: 16px;
    padding-left: 2px;
}
.hbar span {
    width: 100px;
    height: 16px;
    margin-right: 12px;
    background-color: #cdcdcd;
}
.legend {
    display: flex;
    align-items: center;
    gap: 9px;
    height: 23px;
    padding-left: 5px;
}
.quick + .legend {
    margin-top: 7px;
}
.legend svg {
    width: 12px;
    height: 12px;
}

/* Form */
.form {
    width: 384px;
    flex: none;
    display: flex;
    flex-direction: column;
    gap: 2px;
    margin: 37px 0 0 11px;
}
fieldset {
    min-width: 0;
    margin: 0;
    padding: 2px 0 4px 7px;
    border: 1px solid #dcdcdc;
}
legend {
    height: 12px;
    margin-left: -2px;
    padding: 0 3px;
    line-height: 14px;
}
.row {
    display: flex;
    align-items: center;
    height: 28px;
}
.row label {
    padding-top: 2px;
}
.name {
    display: flex;
    align-items: center;
    gap: 2px;
    width: 111px;
}
.control {
    display: flex;
    align-items: center;
    justify-content: space-between;
    width: 189px;
}
.row select, .combo {
    width: 189px;
}
.wide {
    display: flex;
    align-items: center;
    justify-content: flex-end;
    gap: 27px;
    width: 300px;
}
.row select {
    appearance: none;
    height: 21px;
    padding: 1px 3px 0;
    border: 1px solid #adadad;
    border-radius: 0;
    color: #000;
    background: #e1e1e1 url("data:image/svg+xml,%3Csvg xmlns='http://www.w3.org/2000/svg' width='9' height='6'%3E%3Cpath d='M.5 .5l4 4 4-4' fill='none' stroke='%23555'/%3E%3C/svg%3E") no-repeat right 4px center;
}
.row select.open {
    display: block;
    border-color: #005499;
    background-color: #cce4f7;
}
.row input[type=text] {
    width: 60px;
    height: 23px;
    margin-left: 9px;
    padding: 0 2px 3px;
    border: 1px solid #7a7a7a;
    color: #222;
    background-color: #ffff80;
    box-shadow: inset 0 0 0 1px #fff;
}
input[type=checkbox] {
    appearance: none;
    flex: none;
    width: 13px;
    height: 13px;
    border: 1px solid #333;
    background-color: #fff;
}
input[type=checkbox]:checked {
    background-image: url("data:image/svg+xml,%3Csvg xmlns='http://www.w3.org/2000/svg' width='11' height='11'%3E%3Cpath d='M1.500 5l3 3L10 2.500' fill='none' stroke='%23444' stroke-width='1.300'/%3E%3C/svg%3E");
}
.pick {
    width: 84px;
    height: 21px;
    border: 1px solid #adadad;
    background-color: #e1e1e1;
}
.pick svg {
    width: 20px;
    height: 20px;
    margin: 0 auto;
}
.swap {
    display: flex;
    align-items: center;
    gap: 3px;
    margin-left: 9px;
    white-space: nowrap;
}
.machining {
    padding-bottom: 7px;
}
.machining .row + .row {
    margin-top: 29px;
}
.tight {
    padding: 0 0 2px 7px;
}
.tight .row {
    height: 23px;
}
.tight .row + .row {
    margin-top: 5px;
}
.advanced {
    min-height: 85px;
}
.extend {
    min-height: 121px;
    margin-top: 2px;
}
.combo {
    position: relative;
}
.options {
    position: absolute;
    left: 0;
    right: 0;
    top: 20px;
    z-index: 1;
    padding-bottom: 1px;
    border: 1px solid #0078d7;
    background-color: #fff;
    box-shadow: 3px 3px 3px rgba(0, 0, 0, 0.5);
}
.options li {
    height: 13px;
    padding-left: 2px;
    line-height: 16px;
}
.options .hover {
    background-color: #3399ff;
    color: #fff;
}
.pointers {
    position: absolute;
    left: 112px;
    top: -7px;
    z-index: 2;
    width: 170px;
    height: 56px;
    fill: #ff3b3b;
}
.preview {
    flex: 1;
    padding: 99px 0 0 46px;
}
.preview svg {
    width: 268px;
    height: 198px;
}
.dialog-foot {
    display: flex;
    align-items: flex-end;
    justify-content: flex-end;
    gap: 8px;
    padding: 0 1px 2px;
}
.dialog-foot button {
    display: flex;
    align-items: center;
    justify-content: center;
    width: 52px;
    height: 27px;
    border: 1px solid #adadad;
    background-color: #e1e1e1;
}
.dialog-foot button svg {
    width: 22px;
    height: 22px;
}
.dialog-foot .ok {
    border: 2px solid #0078d7;
}
.dialog-foot .off {
    background-color: #ccc;
    border-color: #bfbfbf;
}
.dialog-foot .what {
    margin-left: -6px;
}
.sizer {
    width: 7px;
    height: 9px;
    margin-left: -7px;
}
```
